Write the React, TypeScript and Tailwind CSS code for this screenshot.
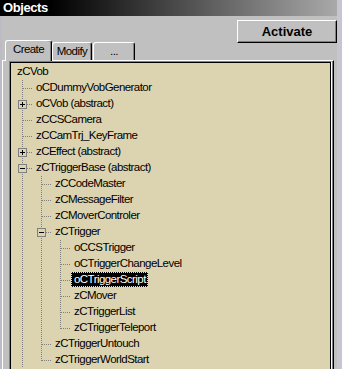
import React from "react";

type Guide = "pipe" | "tee" | "ell" | "none";

type Node = {
  label: string;
  guides: Guide[];
  box?: "+" | "-";
  selected?: boolean;
};

const TREE: Node[] = [
  { label: "zCVob", guides: [] },
  { label: "oCDummyVobGenerator", guides: ["tee"] },
  { label: "oCVob (abstract)", guides: ["tee"], box: "+" },
  { label: "zCCSCamera", guides: ["tee"] },
  { label: "zCCamTrj_KeyFrame", guides: ["tee"] },
  { label: "zCEffect (abstract)", guides: ["tee"], box: "+" },
  { label: "zCTriggerBase (abstract)", guides: ["tee"], box: "-" },
  { label: "zCCodeMaster", guides: ["pipe", "tee"] },
  { label: "zCMessageFilter", guides: ["pipe", "tee"] },
  { label: "zCMoverControler", guides: ["pipe", "tee"] },
  { label: "zCTrigger", guides: ["pipe", "tee"], box: "-" },
  { label: "oCCSTrigger", guides: ["pipe", "pipe", "tee"] },
  { label: "oCTriggerChangeLevel", guides: ["pipe", "pipe", "tee"] },
  { label: "oCTriggerScript", guides: ["pipe", "pipe", "tee"], selected: true },
  { label: "zCMover", guides: ["pipe", "pipe", "tee"] },
  { label: "zCTriggerList", guides: ["pipe", "pipe", "tee"] },
  { label: "zCTriggerTeleport", guides: ["pipe", "pipe", "ell"] },
  { label: "zCTriggerUntouch", guides: ["pipe", "tee"] },
  { label: "zCTriggerWorldStart", guides: ["pipe", "ell"] },
];

const dot = { stroke: "#808080", strokeDasharray: "1 1" };

// one indent column of the tree, 19px wide
const GuideCell = ({ kind, box }: { kind: Guide; box?: "+" | "-" }) => (
  <svg width="19" height="16" className="block shrink-0">
    {(kind === "pipe" || kind === "tee") && (
      <line x1="9.5" y1="0" x2="9.5" y2="16" {...dot} />
    )}
    {kind === "ell" && <line x1="9.5" y1="0" x2="9.5" y2="9" {...dot} />}
    {(kind === "tee" || kind === "ell") && (
      <line x1="10" y1="8.5" x2="19" y2="8.5" {...dot} />
    )}
    {box && (
      <>
        <rect x="5.5" y="4.5" width="8" height="8" fill="#dcd3b0" stroke="#808080" />
        <line x1="7" y1="8.5" x2="12" y2="8.5" stroke="#000" />
        {box === "+" && <line x1="9.5" y1="6" x2="9.5" y2="11" stroke="#000" />}
      </>
    )}
  </svg>
);

const TreeRow = ({ node }: { node: Node }) => (
  <div className="flex h-[16px] items-start">
    {node.guides.map((g, i) => (
      <GuideCell
        key={i}
        kind={g}
        box={i === node.guides.length - 1 ? node.box : undefined}
      />
    ))}
    <span
      className={
        "ml-[1px] h-[15px] whitespace-nowrap border border-dotted pl-[2px] pr-[1px] leading-[13px] " +
        (node.selected
          ? "border-[#e6dfc4] bg-black text-white"
          : "border-transparent text-black")
      }
    >
      {node.label}
    </span>
  </div>
);

const Tab = ({
  label,
  active,
  width,
}: {
  label: string;
  active?: boolean;
  width: string;
}) => (
  <div
    className={
      "flex justify-center rounded-t-[3px] border-l border-t border-r border-l-white border-t-white border-r-black bg-[#c0c0c0] pt-[2px] leading-[13px] shadow-[inset_-1px_0_#808080] " +
      width +
      (active ? " relative z-10 -mb-[1px] h-[21px]" : " h-[18px]")
    }
  >
    {label}
  </div>
);

export default function App() {
  return (
    <div className="flex h-[369px] w-[342px] overflow-hidden bg-[#c0c0c0] font-['Liberation_Sans',Arial,sans-serif] text-[11.5px] tracking-[-0.55px] text-black">
      <div className="flex w-[337px] shrink-0 flex-col">
        <div className="h-[16px] shrink-0 bg-[linear-gradient(90deg,#000_0%,#000_15%,#a9a9a9_100%)] pl-[3px] text-[13px] font-bold leading-[16px] tracking-[-0.4px] text-white">
          Objects
        </div>
        <div className="flex flex-1">
          <div className="w-[2px] shrink-0 bg-[#bcbcc6]" />
          <div className="flex flex-1 flex-col">
            <div className="flex h-[44px] shrink-0 items-end">
              <div className="ml-[3px] flex items-end">
                <Tab label="Create" active width="w-[47px]" />
                <Tab label="Modify" width="w-[40px]" />
                <div className="w-[1px]" />
                <Tab label="..." width="w-[42px]" />
              </div>
              <button className="mb-[17px] ml-auto flex h-[23px] w-[100px] items-center justify-center border border-l-white border-t-white border-r-black border-b-black bg-[#c0c0c0] text-[13px] font-bold tracking-normal shadow-[inset_-1px_-1px_#808080]">
                Activate
              </button>
            </div>
            <div className="flex-1 w-[332px] border-l border-t border-r border-l-white border-t-white border-r-black shadow-[inset_-1px_0_#808080]">
              <div className="ml-[6px] h-[340px] w-[323px] border border-l-[#808080] border-t-[#808080] border-r-white border-b-white">
                <div className="h-full border border-l-black border-t-black border-r-black border-b-[#dfdfdf] bg-[#dcd3b0] pl-[2px] pt-[1px]">
                  {TREE.map((n) => (
                    <TreeRow key={n.label} node={n} />
                  ))}
                </div>
              </div>
            </div>
          </div>
        </div>
      </div>
      <div className="w-[5px] shrink-0 bg-[#c8c5d1]" />
    </div>
  );
}
